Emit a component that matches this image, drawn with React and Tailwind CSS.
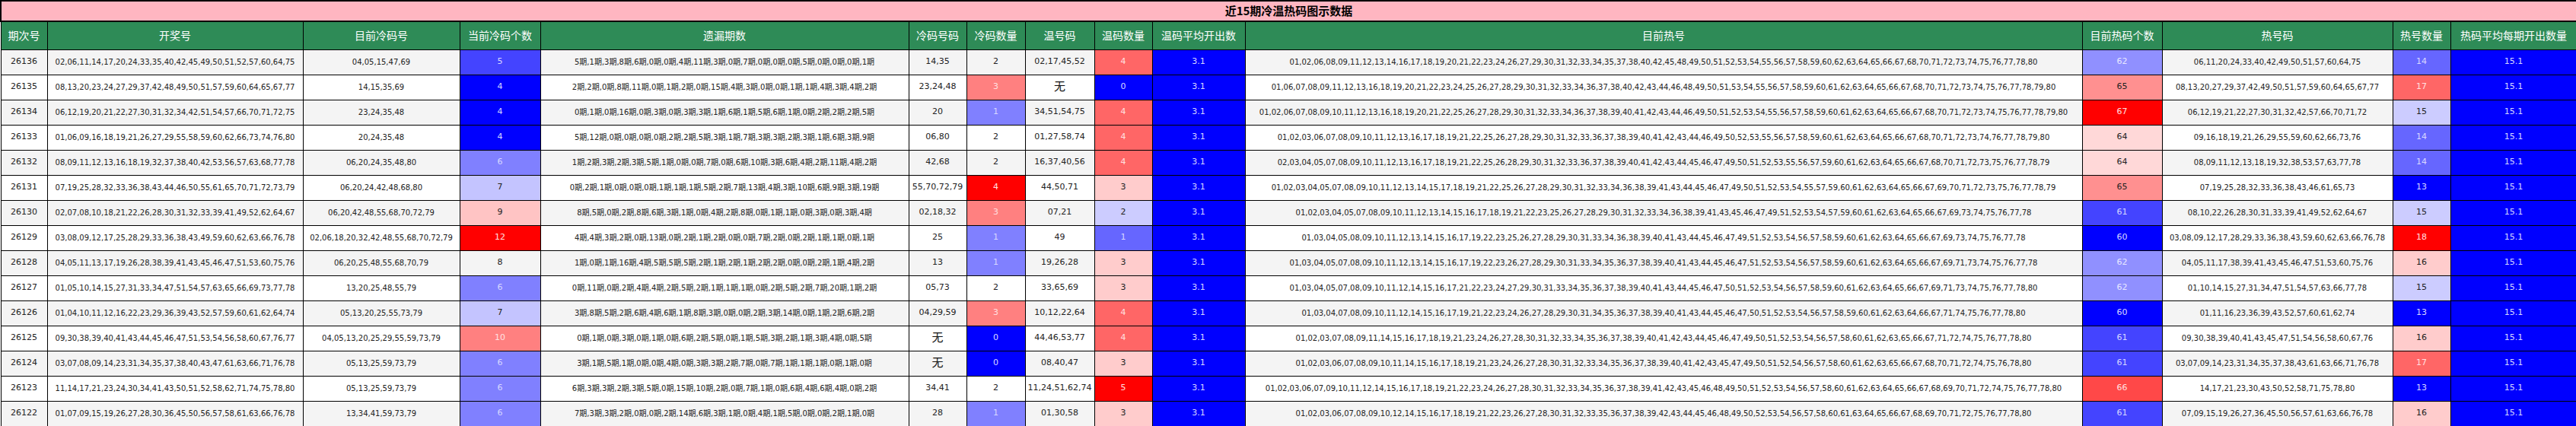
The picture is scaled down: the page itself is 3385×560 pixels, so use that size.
import React from "react";

// heat colours, class names written out in full
const C = {
  b0: "bg-[#0000ff] text-[#d8d8ff]",
  b1: "bg-[#4444ff] text-[#d8d8ff]",
  b2: "bg-[#6666ff] text-[#d8d8ff]",
  b3: "bg-[#8080ff] text-[#d8d8ff]",
  b4: "bg-[#9090ff] text-[#e8e8ff]",
  b5: "bg-[#c4c4ff] text-[#222]",
  b6: "bg-[#ccccff] text-[#222]",
  w: "text-[#222]",
  r5: "bg-[#ffc4c4] text-[#222]",
  r6: "bg-[#ffcccc] text-[#222]",
  r7: "bg-[#ffd8d8] text-[#222]",
  r4: "bg-[#ff9090] text-[#222]",
  r3: "bg-[#ff8080] text-[#ffe0e0]",
  r2: "bg-[#ff6666] text-[#ffe0e0]",
  r1: "bg-[#ff4848] text-[#ffe0e0]",
  r0: "bg-[#ff0000] text-[#ffe0e0]",
};

const rows = [
  ["26136","02,06,11,14,17,20,24,33,35,40,42,45,49,50,51,52,57,60,64,75","04,05,15,47,69",["5","b1"],"5期,1期,3期,8期,6期,0期,0期,4期,11期,3期,0期,7期,0期,0期,0期,5期,0期,0期,0期,1期","14,35",["2","w"],"02,17,45,52",["4","r2"],"01,02,06,08,09,11,12,13,14,16,17,18,19,20,21,22,23,24,26,27,29,30,31,32,33,34,35,37,38,40,42,45,48,49,50,51,52,53,54,55,56,57,58,59,60,62,63,64,65,66,67,68,70,71,72,73,74,75,76,77,78,80",["62","b4"],"06,11,20,24,33,40,42,49,50,51,57,60,64,75",["14","b2"]],
  ["26135","08,13,20,23,24,27,29,37,42,48,49,50,51,57,59,60,64,65,67,77","14,15,35,69",["4","b0"],"2期,2期,0期,8期,11期,0期,1期,2期,0期,15期,4期,3期,0期,0期,1期,1期,4期,3期,4期,2期","23,24,48",["3","r3"],"无",["0","b0"],"01,06,07,08,09,11,12,13,16,18,19,20,21,22,23,24,25,26,27,28,29,30,31,32,33,34,36,37,38,40,42,43,44,46,48,49,50,51,53,54,55,56,57,58,59,60,61,62,63,64,65,66,67,68,70,71,72,73,74,75,76,77,78,79,80",["65","r4"],"08,13,20,27,29,37,42,49,50,51,57,59,60,64,65,67,77",["17","r2"]],
  ["26134","06,12,19,20,21,22,27,30,31,32,34,42,51,54,57,66,70,71,72,75","23,24,35,48",["4","b0"],"0期,1期,0期,16期,0期,3期,0期,3期,3期,1期,6期,1期,5期,6期,1期,0期,2期,2期,2期,5期","20",["1","b3"],"34,51,54,75",["4","r2"],"01,02,06,07,08,09,10,11,12,13,16,18,19,20,21,22,25,26,27,28,29,30,31,32,33,34,36,37,38,39,40,41,42,43,44,46,49,50,51,52,53,54,55,56,57,58,59,60,61,62,63,64,65,66,67,68,70,71,72,73,74,75,76,77,78,79,80",["67","r0"],"06,12,19,21,22,27,30,31,32,42,57,66,70,71,72",["15","b6"]],
  ["26133","01,06,09,16,18,19,21,26,27,29,55,58,59,60,62,66,73,74,76,80","20,24,35,48",["4","b0"],"5期,12期,0期,0期,0期,0期,2期,2期,5期,3期,1期,7期,3期,3期,2期,3期,1期,6期,3期,9期","06,80",["2","w"],"01,27,58,74",["4","r2"],"01,02,03,06,07,08,09,10,11,12,13,16,17,18,19,21,22,25,26,27,28,29,30,31,32,33,36,37,38,39,40,41,42,43,44,46,49,50,52,53,55,56,57,58,59,60,61,62,63,64,65,66,67,68,70,71,72,73,74,76,77,78,79,80",["64","r7"],"09,16,18,19,21,26,29,55,59,60,62,66,73,76",["14","b2"]],
  ["26132","08,09,11,12,13,16,18,19,32,37,38,40,42,53,56,57,63,68,77,78","06,20,24,35,48,80",["6","b3"],"1期,2期,3期,2期,3期,5期,1期,0期,0期,7期,0期,6期,10期,3期,6期,4期,2期,11期,4期,2期","42,68",["2","w"],"16,37,40,56",["4","r2"],"02,03,04,05,07,08,09,10,11,12,13,16,17,18,19,21,22,25,26,28,29,30,31,32,33,36,37,38,39,40,41,42,43,44,45,46,47,49,50,51,52,53,55,56,57,59,60,61,62,63,64,65,66,67,68,70,71,72,73,75,76,77,78,79",["64","r7"],"08,09,11,12,13,18,19,32,38,53,57,63,77,78",["14","b2"]],
  ["26131","07,19,25,28,32,33,36,38,43,44,46,50,55,61,65,70,71,72,73,79","06,20,24,42,48,68,80",["7","b5"],"0期,2期,1期,0期,0期,0期,1期,1期,1期,5期,2期,7期,13期,4期,3期,10期,6期,9期,3期,19期","55,70,72,79",["4","r0"],"44,50,71",["3","r6"],"01,02,03,04,05,07,08,09,10,11,12,13,14,15,17,18,19,21,22,25,26,27,28,29,30,31,32,33,34,36,38,39,41,43,44,45,46,47,49,50,51,52,53,54,55,57,59,60,61,62,63,64,65,66,67,69,70,71,72,73,75,76,77,78,79",["65","r4"],"07,19,25,28,32,33,36,38,43,46,61,65,73",["13","b0"]],
  ["26130","02,07,08,10,18,21,22,26,28,30,31,32,33,39,41,49,52,62,64,67","06,20,42,48,55,68,70,72,79",["9","r5"],"8期,5期,0期,2期,8期,6期,3期,1期,0期,4期,2期,8期,0期,1期,1期,0期,3期,0期,3期,4期","02,18,32",["3","r3"],"07,21",["2","b6"],"01,02,03,04,05,07,08,09,10,11,12,13,14,15,16,17,18,19,21,22,23,25,26,27,28,29,30,31,32,33,34,36,38,39,41,43,45,46,47,49,51,52,53,54,57,59,60,61,62,63,64,65,66,67,69,73,74,75,76,77,78",["61","b1"],"08,10,22,26,28,30,31,33,39,41,49,52,62,64,67",["15","b6"]],
  ["26129","03,08,09,12,17,25,28,29,33,36,38,43,49,59,60,62,63,66,76,78","02,06,18,20,32,42,48,55,68,70,72,79",["12","r0"],"4期,4期,3期,2期,0期,13期,0期,2期,1期,2期,0期,0期,7期,2期,0期,2期,1期,1期,0期,1期","25",["1","b3"],"49",["1","b2"],"01,03,04,05,08,09,10,11,12,13,14,15,16,17,19,22,23,25,26,27,28,29,30,31,33,34,36,38,39,40,41,43,44,45,46,47,49,51,52,53,54,56,57,58,59,60,61,62,63,64,65,66,67,69,73,74,75,76,77,78",["60","b0"],"03,08,09,12,17,28,29,33,36,38,43,59,60,62,63,66,76,78",["18","r0"]],
  ["26128","04,05,11,13,17,19,26,28,38,39,41,43,45,46,47,51,53,60,75,76","06,20,25,48,55,68,70,79",["8","w"],"1期,0期,1期,16期,4期,5期,5期,5期,2期,1期,2期,1期,2期,2期,0期,0期,2期,1期,4期,2期","13",["1","b3"],"19,26,28",["3","r6"],"01,03,04,05,07,08,09,10,11,12,13,14,15,16,17,19,22,23,26,27,28,29,30,31,33,34,35,36,37,38,39,40,41,43,44,45,46,47,51,52,53,54,56,57,58,59,60,61,62,63,64,65,66,67,69,71,73,74,75,76,77,78",["62","b4"],"04,05,11,17,38,39,41,43,45,46,47,51,53,60,75,76",["16","r6"]],
  ["26127","01,05,10,14,15,27,31,33,34,47,51,54,57,63,65,66,69,73,77,78","13,20,25,48,55,79",["6","b3"],"0期,11期,0期,2期,4期,4期,2期,5期,2期,1期,1期,1期,0期,2期,5期,2期,7期,20期,1期,2期","05,73",["2","w"],"33,65,69",["3","r6"],"01,03,04,05,07,08,09,10,11,12,14,15,16,17,21,22,23,24,27,29,30,31,33,34,35,36,37,38,39,40,41,43,44,45,46,47,50,51,52,53,54,56,57,58,59,60,61,62,63,64,65,66,67,69,71,73,74,75,76,77,78,80",["62","b4"],"01,10,14,15,27,31,34,47,51,54,57,63,66,77,78",["15","b6"]],
  ["26126","01,04,10,11,12,16,22,23,29,36,39,43,52,57,59,60,61,62,64,74","05,13,20,25,55,73,79",["7","b5"],"3期,8期,5期,2期,6期,4期,6期,1期,8期,3期,0期,0期,2期,3期,14期,0期,1期,2期,6期,2期","04,29,59",["3","r3"],"10,12,22,64",["4","r2"],"01,03,04,07,08,09,10,11,12,14,15,16,17,19,21,22,23,24,26,27,28,29,30,31,34,35,36,37,38,39,40,41,43,44,45,46,47,50,51,52,53,54,56,57,58,59,60,61,62,63,64,66,67,71,74,75,76,77,78,80",["60","b0"],"01,11,16,23,36,39,43,52,57,60,61,62,74",["13","b0"]],
  ["26125","09,30,38,39,40,41,43,44,45,46,47,51,53,54,56,58,60,67,76,77","04,05,13,20,25,29,55,59,73,79",["10","r3"],"0期,1期,0期,3期,0期,1期,0期,6期,2期,5期,0期,1期,5期,3期,2期,1期,3期,4期,0期,5期","无",["0","b0"],"44,46,53,77",["4","r2"],"01,02,03,07,08,09,11,14,15,16,17,18,19,21,23,24,26,27,28,30,31,32,33,34,35,36,37,38,39,40,41,42,43,44,45,46,47,49,50,51,52,53,54,56,57,58,60,61,62,63,65,66,67,71,72,74,75,76,77,78,80",["61","b1"],"09,30,38,39,40,41,43,45,47,51,54,56,58,60,67,76",["16","r6"]],
  ["26124","03,07,08,09,14,23,31,34,35,37,38,40,43,47,61,63,66,71,76,78","05,13,25,59,73,79",["6","b3"],"3期,1期,5期,1期,0期,0期,4期,0期,3期,3期,2期,7期,0期,7期,1期,1期,1期,0期,1期,0期","无",["0","b0"],"08,40,47",["3","r6"],"01,02,03,06,07,08,09,10,11,14,15,16,17,18,19,21,23,24,26,27,28,30,31,32,33,34,35,36,37,38,39,40,41,42,43,45,47,49,50,51,52,54,56,57,58,60,61,62,63,65,66,67,68,70,71,72,74,75,76,78,80",["61","b1"],"03,07,09,14,23,31,34,35,37,38,43,61,63,66,71,76,78",["17","r2"]],
  ["26123","11,14,17,21,23,24,30,34,41,43,50,51,52,58,62,71,74,75,78,80","05,13,25,59,73,79",["6","b3"],"6期,3期,3期,2期,3期,5期,0期,15期,10期,2期,0期,7期,1期,0期,6期,4期,6期,4期,0期,2期","34,41",["2","w"],"11,24,51,62,74",["5","r0"],"01,02,03,06,07,09,10,11,12,14,15,16,17,18,19,21,22,23,24,26,27,28,30,31,32,33,34,35,36,37,38,39,41,42,43,45,46,48,49,50,51,52,53,54,56,57,58,60,61,62,63,64,65,66,67,68,69,70,71,72,74,75,76,77,78,80",["66","r1"],"14,17,21,23,30,43,50,52,58,71,75,78,80",["13","b0"]],
  ["26122","01,07,09,15,19,26,27,28,30,36,45,50,56,57,58,61,63,66,76,78","13,34,41,59,73,79",["6","b3"],"7期,3期,3期,2期,0期,0期,2期,14期,6期,3期,1期,0期,4期,1期,5期,0期,0期,2期,1期,0期","28",["1","b3"],"01,30,58",["3","r6"],"01,02,03,06,07,08,09,10,12,14,15,16,17,18,19,21,22,23,26,27,28,30,31,32,33,35,36,37,38,39,42,43,44,45,46,48,49,50,52,53,54,56,57,58,60,61,63,64,65,66,67,68,69,70,71,72,75,76,77,78,80",["61","b1"],"07,09,15,19,26,27,36,45,50,56,57,61,63,66,76,78",["16","r6"]],
];

const heads = ["期次号","开奖号","目前冷码号","当前冷码个数","遗漏期数","冷码号码","冷码数量","温号码","温码数量","温码平均开出数","目前热号","目前热码个数","热号码","热号数量","热码平均每期开出数量"];
const widths = ["w-[61px]","w-[336px]","w-[206px]","w-[106px]","w-[484px]","w-[76px]","w-[77px]","w-[91px]","w-[76px]","w-[122px]","w-[1100px]","w-[105px]","w-[303px]","w-[76px]","w-[166px]"];

const td = "border border-black text-center align-middle px-0 whitespace-nowrap overflow-hidden";

function Heat({ v }) {
  return <td className={`${td} text-[11px] ${C[v[1]]}`}>{v[0]}</td>;
}

function Txt({ t, cls = "" }) {
  if (t === "无") return <td className={`${td} text-[15px] text-[#111] ${cls}`}>无</td>;
  return <td className={`${td} text-[10px] text-[#222] ${cls}`}>{t}</td>;
}

export default function App() {
  return (
    <div className="w-[3385px] h-[560px] bg-white overflow-hidden" style={{ fontFamily: '"DejaVu Sans", "Noto Sans CJK SC", sans-serif' }}>
      <table className="table-fixed border-collapse w-[3385px]">
        <colgroup>
          {widths.map((w, i) => <col key={i} className={w} />)}
        </colgroup>
        <thead>
          <tr className="h-[27px]">
            <th colSpan={15} className="bg-[#ffb6c1] border-2 border-black text-[15px] font-bold text-black" style={{ fontFamily: '"Noto Sans CJK SC", sans-serif' }}>近15期冷温热码图示数据</th>
          </tr>
          <tr className="h-[37px]">
            {heads.map((h, i) => (
              <th key={i} className={`${td} border-t-2 bg-[#2e8b57] text-white text-[14px] font-normal ${i === 10 ? "text-center" : ""}`} style={{ fontFamily: '"Noto Sans CJK SC", sans-serif' }}>{h}</th>
            ))}
          </tr>
        </thead>
        <tbody>
          {rows.map((r, i) => {
            const bg = i % 2 === 0 ? "bg-[#f4f4f4]" : "bg-white";
            return (
              <tr key={r[0]} className={`h-[33px] ${bg}`}>
                <Txt t={r[0]} cls="text-[11px]" />
                <Txt t={r[1]} />
                <Txt t={r[2]} />
                <Heat v={r[3]} />
                <td className={`${td} text-[10px] text-[#222]`}>{r[4]}</td>
                <Txt t={r[5]} cls="text-[11px]" />
                <Heat v={r[6]} />
                <Txt t={r[7]} cls="text-[11px]" />
                <Heat v={r[8]} />
                <td className={`${td} text-[11px] ${C.b0}`}>3.1</td>
                <Txt t={r[9]} />
                <Heat v={r[10]} />
                <Txt t={r[11]} />
                <Heat v={r[12]} />
                <td className={`${td} text-[11px] ${C.b0}`}>15.1</td>
              </tr>
            );
          })}
        </tbody>
      </table>
    </div>
  );
}
